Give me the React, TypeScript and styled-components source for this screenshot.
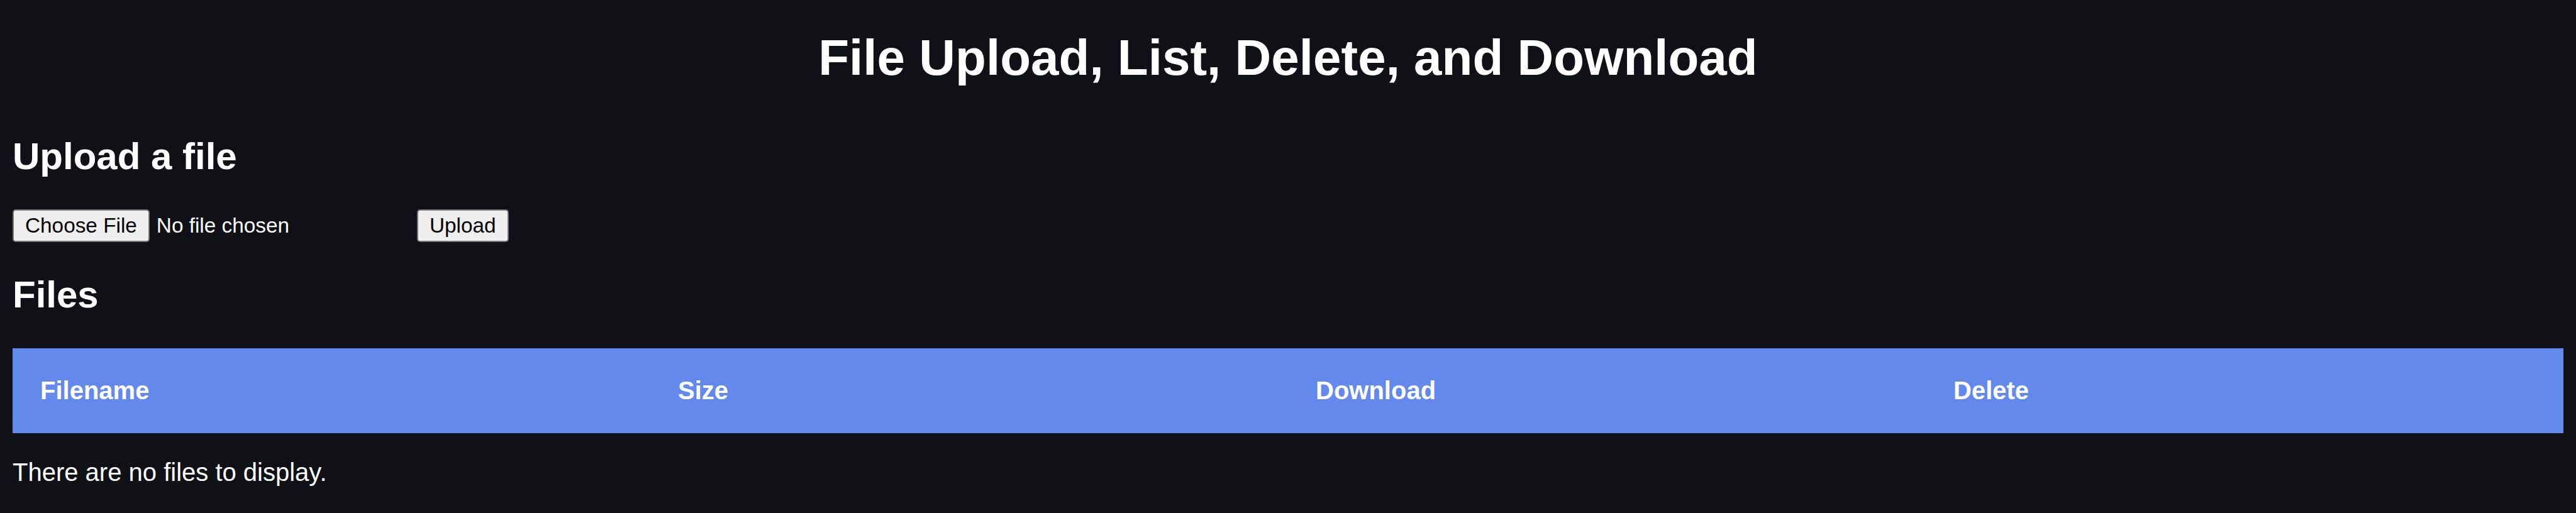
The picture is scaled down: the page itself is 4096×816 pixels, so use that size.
import React from "react";
import styled, { createGlobalStyle } from "styled-components";

const GlobalStyle = createGlobalStyle`
  html, body {
    margin: 0;
    padding: 0;
    background: #0f1116;
  }
  body {
    font-family: "Liberation Sans", Arial, Helvetica, sans-serif;
    color: #ffffff;
  }
`;

const Page = styled.main`
  display: flex;
  flex-direction: column;
  align-items: stretch;
  min-height: 816px;
  box-sizing: border-box;
  padding: 0 20px;
  background: #0f1116;
  font-family: "Liberation Sans", Arial, Helvetica, sans-serif;
  color: #ffffff;
`;

const Title = styled.h1`
  margin: 52px 0 0;
  font-size: 80px;
  line-height: 80px;
  font-weight: 700;
  text-align: center;
`;

const SectionTitle = styled.h2<{ $gap: number }>`
  margin: ${(p) => p.$gap}px 0 0;
  font-size: 60px;
  line-height: 60px;
  font-weight: 700;
`;

const UploadForm = styled.form`
  display: flex;
  align-items: center;
  gap: 9px;
  margin-top: 54px;
`;

const FilePicker = styled.label`
  display: flex;
  align-items: center;
  gap: 11px;
  width: 634px;
  cursor: default;
`;

const HiddenInput = styled.input`
  display: none;
`;

const NativeButton = styled.button`
  display: inline-flex;
  align-items: center;
  justify-content: center;
  box-sizing: border-box;
  height: 52px;
  padding: 0 18px;
  margin: 0;
  border: 2px solid #767676;
  border-radius: 5px;
  background: #efefef;
  color: #000000;
  font-family: "Liberation Sans", Arial, Helvetica, sans-serif;
  font-size: 33.33px;
  line-height: 1;
`;

const PickerButton = styled(NativeButton).attrs({ as: "span" })``;

const PickerText = styled.span`
  font-size: 33.33px;
  line-height: 1;
  color: #ffffff;
  white-space: nowrap;
`;

const FileTable = styled.table`
  margin-top: 55px;
  width: 100%;
  border-collapse: collapse;
  table-layout: fixed;
`;

const HeaderRow = styled.tr`
  background: #6389ed;
`;

const HeaderCell = styled.th`
  width: 25%;
  padding: 44px 44px 45px;
  text-align: left;
  font-size: 40px;
  line-height: 46px;
  font-weight: 700;
  color: #ffffff;
`;

const EmptyMessage = styled.p`
  margin: 42px 0 0;
  font-size: 40px;
  line-height: 40px;
`;

const columns = ["Filename", "Size", "Download", "Delete"];

export default function App() {
  return (
    <>
      <GlobalStyle />
      <Page>
        <Title>File Upload, List, Delete, and Download</Title>
        <SectionTitle $gap={87}>Upload a file</SectionTitle>
        <UploadForm onSubmit={(e) => e.preventDefault()}>
          <FilePicker>
            <HiddenInput type="file" />
            <PickerButton>Choose File</PickerButton>
            <PickerText>No file chosen</PickerText>
          </FilePicker>
          <NativeButton type="submit">Upload</NativeButton>
        </UploadForm>
        <SectionTitle $gap={54}>Files</SectionTitle>
        <FileTable>
          <thead>
            <HeaderRow>
              {columns.map((c) => (
                <HeaderCell key={c}>{c}</HeaderCell>
              ))}
            </HeaderRow>
          </thead>
        </FileTable>
        <EmptyMessage>There are no files to display.</EmptyMessage>
      </Page>
    </>
  );
}
